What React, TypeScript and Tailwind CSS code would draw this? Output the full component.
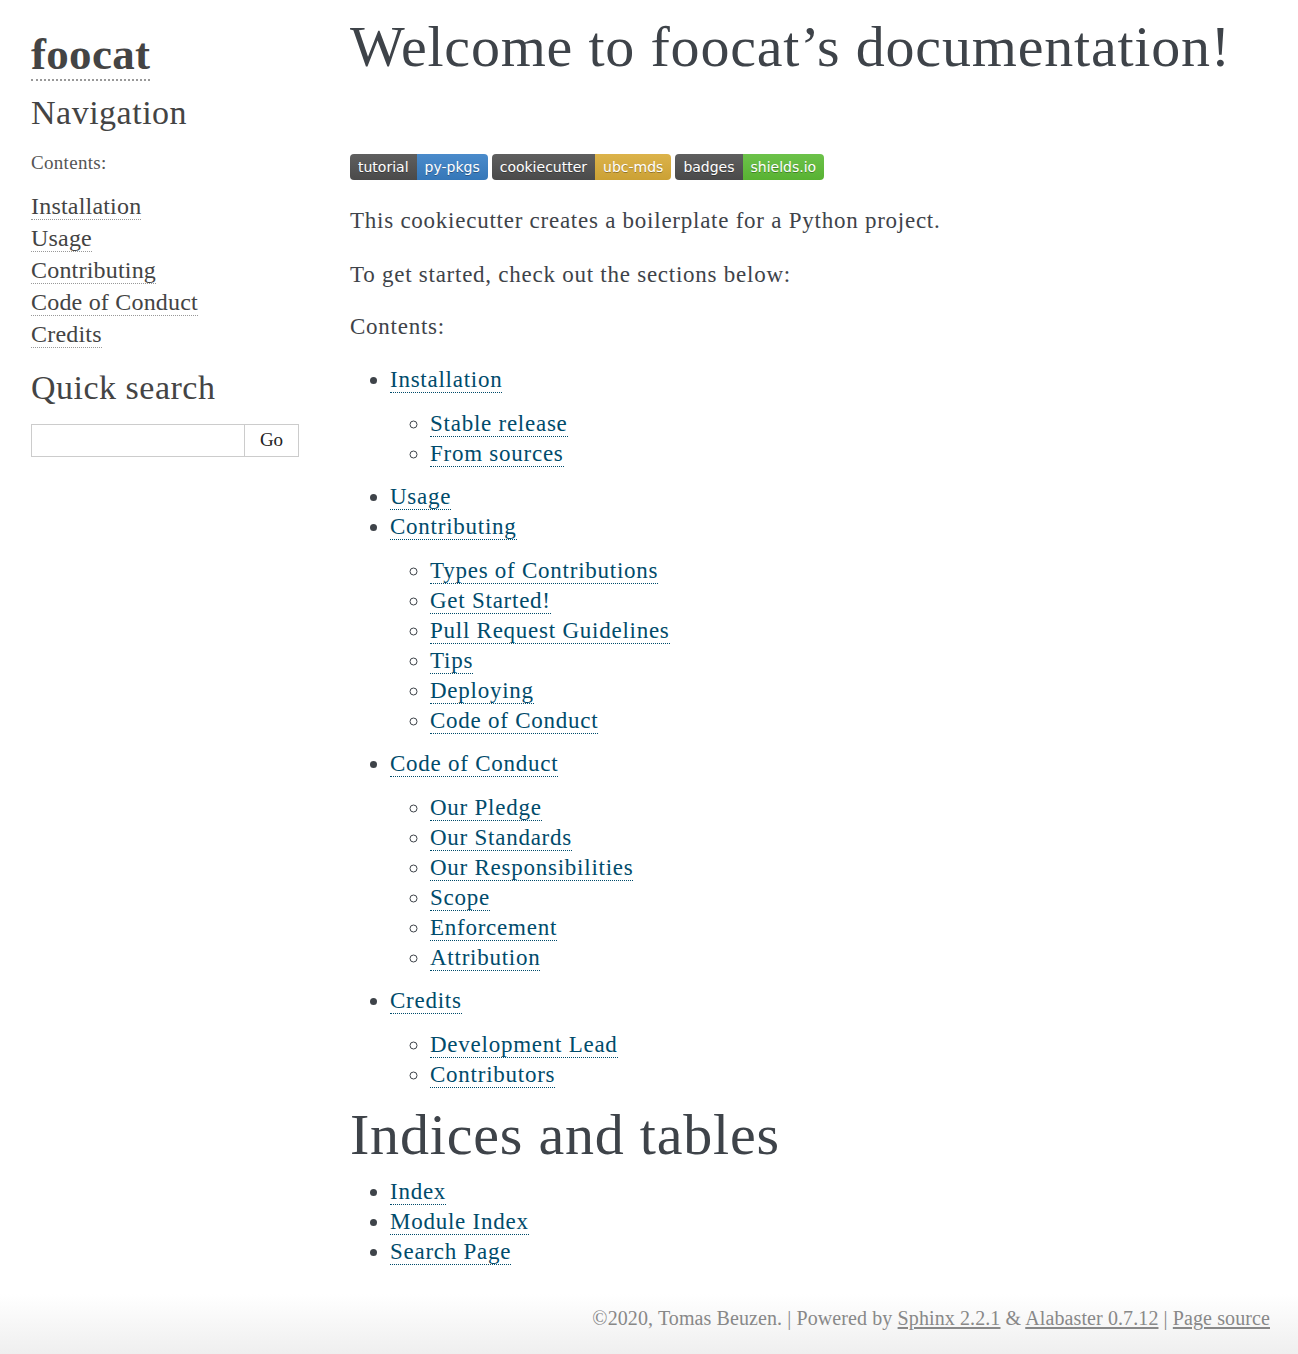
import React from 'react';

// 目錄資料
type TocItem = {
    title: string;
    children?: string[];
};

const toc: TocItem[] = [
    { title: 'Installation', children: ['Stable release', 'From sources'] },
    { title: 'Usage' },
    {
        title: 'Contributing',
        children: ['Types of Contributions', 'Get Started!', 'Pull Request Guidelines', 'Tips', 'Deploying', 'Code of Conduct'],
    },
    {
        title: 'Code of Conduct',
        children: ['Our Pledge', 'Our Standards', 'Our Responsibilities', 'Scope', 'Enforcement', 'Attribution'],
    },
    { title: 'Credits', children: ['Development Lead', 'Contributors'] },
];

const sideLinks = ['Installation', 'Usage', 'Contributing', 'Code of Conduct', 'Credits'];

type BadgeProps = {
    label: string;
    value: string;
    color: string;
};

// shields.io 風格徽章
const Badge: React.FC<BadgeProps> = ({ label, value, color }) => (
    <span className="inline-flex h-[26px] overflow-hidden rounded-[4px] font-['DejaVu_Sans',sans-serif] text-[14px] leading-[26px] text-white [text-shadow:0_1px_0_rgba(0,0,0,0.3)]">
        <span className="bg-gradient-to-b from-[#5f5f5f] to-[#4a4a4a] px-[8px]">{label}</span>
        <span className={`px-[8px] ${color}`}>{value}</span>
    </span>
);

const Link: React.FC<{ children: React.ReactNode }> = ({ children }) => (
    <a href="#" className="text-[#004b6b] border-b border-dotted border-[#004b6b]">
        {children}
    </a>
);

export default function App() {
    return (
        <div className="min-h-[1354px] flex flex-col bg-white font-['Liberation_Serif',serif] text-[#3e4349]">
            <div className="flex flex-1 pl-[31px]">
                {/* 側邊欄 */}
                <aside className="w-[267px] shrink-0 pt-[28px] text-[#444]">
                    <h1 className="m-0 text-[45px] font-bold leading-[52px] tracking-[0.3px]">
                        <a href="#" className="border-b-2 border-dotted border-[#999] text-[#444]">foocat</a>
                    </h1>
                    <h3 className="mt-[12px] text-[34px] leading-[42px] font-normal tracking-[0.5px]">Navigation</h3>
                    <p className="mt-[17px] text-[19px] leading-[24px] text-[#555] tracking-[0.3px]">Contents:</p>
                    <ul className="mt-[15px]">
                        {sideLinks.map((s) => (
                            <li key={s} className="text-[24px] leading-[32px] tracking-[0.2px]">
                                <a href="#" className="border-b border-dotted border-[#999] text-[#444]">{s}</a>
                            </li>
                        ))}
                    </ul>
                    <h3 className="mt-[17px] text-[34px] leading-[42px] font-normal tracking-[0.5px]">Quick search</h3>
                    <div className="mt-[15px] flex h-[33px] w-[268px] border border-[#ccc]">
                        <input type="text" className="w-[212px] outline-none" />
                        <button className="flex-1 border-l border-[#ccc] bg-white text-[19px] text-[#222]">Go</button>
                    </div>
                </aside>

                {/* 主要內容 */}
                <main className="ml-[52px] pt-[14px]">
                    <h1 className="text-[58px] leading-[66px] font-normal tracking-[0.8px]">Welcome to foocat’s documentation!</h1>
                    <div className="mt-[74px] flex gap-[4px]">
                        <Badge label="tutorial" value="py-pkgs" color="bg-gradient-to-b from-[#4a8bcb] to-[#3577b8]" />
                        <Badge label="cookiecutter" value="ubc-mds" color="bg-gradient-to-b from-[#dcb34a] to-[#cba135]" />
                        <Badge label="badges" value="shields.io" color="bg-gradient-to-b from-[#6cc24a] to-[#58b232]" />
                    </div>
                    <div className="mt-[26px] text-[23px] leading-[30px] tracking-[0.75px]">
                        <p>This cookiecutter creates a boilerplate for a Python project.</p>
                        <p className="mt-[24px]">To get started, check out the sections below:</p>
                        <p className="mt-[22px]">Contents:</p>
                        <ul className="mt-[23px] list-disc pl-[40px] marker:text-[#3e4349]">
                            {toc.map((item) => (
                                <li key={item.title}>
                                    <Link>{item.title}</Link>
                                    {item.children && (
                                        <ul className="mt-[14px] mb-[13px] list-[circle] pl-[40px]">
                                            {item.children.map((c) => (
                                                <li key={c}>
                                                    <Link>{c}</Link>
                                                </li>
                                            ))}
                                        </ul>
                                    )}
                                </li>
                            ))}
                        </ul>
                    </div>
                    <h1 className="mt-[4px] text-[58px] leading-[64px] font-normal tracking-[0.8px]">Indices and tables</h1>
                    <ul className="mt-[10px] list-disc pl-[40px] text-[23px] leading-[30px] tracking-[0.75px]">
                        <li><Link>Index</Link></li>
                        <li><Link>Module Index</Link></li>
                        <li><Link>Search Page</Link></li>
                    </ul>
                </main>
            </div>

            {/* 頁尾 */}
            <footer className="mt-[20px] h-[60px] bg-gradient-to-b from-white to-[#efefef] pr-[28px] pt-[9px] text-right text-[20px] tracking-[0.1px] text-[#888]">
                ©2020, Tomas Beuzen. | Powered by{' '}
                <a href="#" className="underline underline-offset-2">Sphinx 2.2.1</a> &amp;{' '}
                <a href="#" className="underline underline-offset-2">Alabaster 0.7.12</a> |{' '}
                <a href="#" className="underline underline-offset-2">Page source</a>
            </footer>
        </div>
    );
}
